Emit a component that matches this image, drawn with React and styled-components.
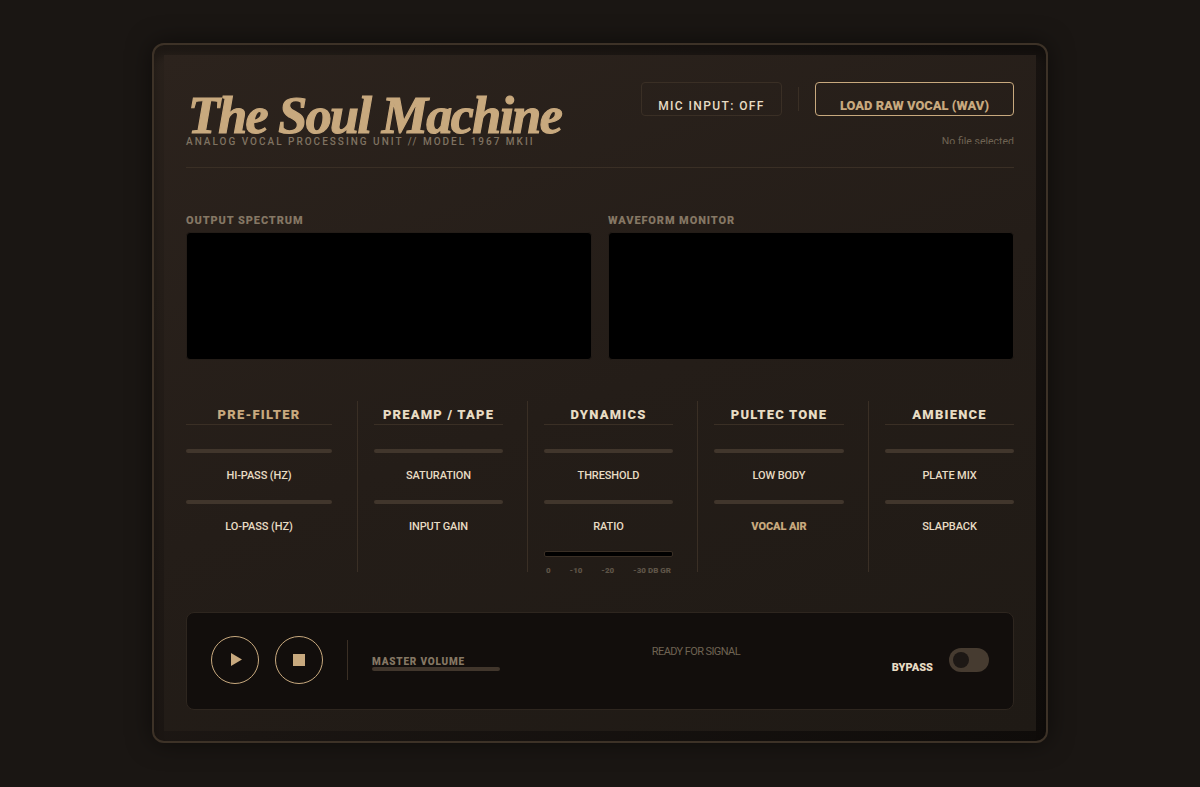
import React from "react";
import styled, { createGlobalStyle } from "styled-components";

const GlobalStyle = createGlobalStyle`
  html, body {
    margin: 0;
    height: 100%;
    background: #1a1613;
  }
  * {
    box-sizing: border-box;
  }
`;

const SANS = `Roboto, "Liberation Sans", Arial, sans-serif`;

const groups = [
  { title: "PRE-FILTER", accent: true, sliders: [{ label: "HI-PASS (HZ)" }, { label: "LO-PASS (HZ)" }] },
  { title: "PREAMP / TAPE", sliders: [{ label: "SATURATION" }, { label: "INPUT GAIN" }] },
  { title: "DYNAMICS", meter: true, sliders: [{ label: "THRESHOLD" }, { label: "RATIO" }] },
  { title: "PULTEC TONE", sliders: [{ label: "LOW BODY" }, { label: "VOCAL AIR", accent: true }] },
  { title: "AMBIENCE", sliders: [{ label: "PLATE MIX" }, { label: "SLAPBACK" }] },
];

function App() {
  return (
    <Page>
      <GlobalStyle />
      <Chassis>
        <Faceplate>
          {/* header */}
          <Header>
            <Brand>
              <Title>The Soul Machine</Title>
              <Subtitle>ANALOG VOCAL PROCESSING UNIT // MODEL 1967 MKII</Subtitle>
            </Brand>
            <HeaderRight>
              <Actions>
                <MicButton>MIC INPUT: OFF</MicButton>
                <VDivider />
                <LoadButton>LOAD RAW VOCAL (WAV)</LoadButton>
              </Actions>
              <FileName>No file selected</FileName>
            </HeaderRight>
          </Header>

          {/* scopes */}
          <Scopes>
            <div>
              <ScopeLabel>OUTPUT SPECTRUM</ScopeLabel>
              <Screen />
            </div>
            <div>
              <ScopeLabel>WAVEFORM MONITOR</ScopeLabel>
              <Screen />
            </div>
          </Scopes>

          {/* channel strip */}
          <Rack>
            {groups.map((group) => (
              <Group key={group.title}>
                <GroupTitle $accent={group.accent}>{group.title}</GroupTitle>
                {group.sliders.map((slider) => (
                  <React.Fragment key={slider.label}>
                    <Track />
                    <SliderLabel $accent={slider.accent}>{slider.label}</SliderLabel>
                  </React.Fragment>
                ))}
                {group.meter && (
                  <>
                    <Meter />
                    <MeterScale>
                      <span>0</span>
                      <span>-10</span>
                      <span>-20</span>
                      <span>-30 DB GR</span>
                    </MeterScale>
                  </>
                )}
              </Group>
            ))}
          </Rack>

          {/* transport */}
          <Transport>
            <RoundButton aria-label="Play">
              <PlayIcon width="11" height="13" viewBox="0 0 11 13">
                <path d="M0 0 L11 6.5 L0 13 Z" fill="#c8a97e" />
              </PlayIcon>
            </RoundButton>
            <RoundButton aria-label="Stop">
              <StopSquare />
            </RoundButton>
            <TransportDivider />
            <Volume>
              <VolumeLabel>MASTER VOLUME</VolumeLabel>
              <VolumeTrack />
            </Volume>
            <Status>READY FOR SIGNAL</Status>
            <Bypass>
              <BypassLabel>BYPASS</BypassLabel>
              <Toggle>
                <Knob />
              </Toggle>
            </Bypass>
          </Transport>
        </Faceplate>
      </Chassis>
    </Page>
  );
}

// Styles
const Page = styled.div`
  min-height: 787px;
  padding-top: 43px;
  display: flex;
  justify-content: center;
  align-items: flex-start;
  background: #1a1613;
  font-family: ${SANS};
`;

const Chassis = styled.div`
  width: 896px;
  height: 700px;
  padding: 10px;
  border: 2px solid #3d3227;
  border-radius: 12px;
  background: linear-gradient(135deg, #2a221c 0%, #1a1512 50%, #0f0c0a 100%);
  box-shadow: 0 0 24px rgba(0, 0, 0, 0.5), inset 0 10px 10px rgba(0, 0, 0, 0.3);
`;

const Faceplate = styled.div`
  height: 676px;
  padding: 0 22px;
  background: linear-gradient(160deg, #2c231d 0%, #241d18 50%, #1f1a15 100%);
`;

const Header = styled.header`
  height: 113px;
  padding-top: 27px;
  display: flex;
  justify-content: space-between;
  border-bottom: 1px solid #3a2f25;
`;

const Brand = styled.div`
  display: flex;
  flex-direction: column;
`;

const Title = styled.h1`
  margin: 0;
  padding: 8px 0 0 2px;
  height: 54px;
  font-family: "Liberation Serif", "Times New Roman", serif;
  font-style: italic;
  font-weight: 700;
  font-size: 52px;
  line-height: 52px;
  letter-spacing: -1.6px;
  color: #c8a97e;
  -webkit-text-stroke: 1.2px #c8a97e;
  white-space: nowrap;
`;

const Subtitle = styled.div`
  font-size: 10px;
  font-weight: 500;
  line-height: 12px;
  letter-spacing: 2px;
  color: #7f7261;
  white-space: nowrap;
`;

const HeaderRight = styled.div`
  display: flex;
  flex-direction: column;
  align-items: flex-end;
`;

const Actions = styled.div`
  display: flex;
  align-items: center;
`;

const MicButton = styled.button`
  width: 141px;
  height: 34px;
  padding: 13px 0 0;
  background: transparent;
  border: 1px solid #3a2f25;
  border-radius: 4px;
  color: #e8dcc4;
  font-family: ${SANS};
  font-weight: 500;
  font-size: 12px;
  letter-spacing: 1.4px;
`;

const VDivider = styled.div`
  width: 1px;
  height: 24px;
  margin: 0 16px;
  background: #3a2f25;
`;

const LoadButton = styled.button`
  width: 199px;
  height: 34px;
  padding: 13px 0 0;
  background: transparent;
  border: 1px solid #c8a97e;
  border-radius: 4px;
  color: #c8a97e;
  font-family: ${SANS};
  font-weight: 900;
  font-size: 12.9px;
`;

const FileName = styled.div`
  margin-top: 20px;
  height: 8px;
  overflow: hidden;
  font-size: 10.5px;
  line-height: 12px;
  color: #6f6353;
`;

const Scopes = styled.section`
  margin-top: 45px;
  display: grid;
  grid-template-columns: 406px 406px;
  justify-content: space-between;
`;

const ScopeLabel = styled.div`
  height: 19px;
  font-weight: 900;
  font-size: 11px;
  line-height: 16px;
  letter-spacing: 0.9px;
  color: #857764;
`;

const Screen = styled.div`
  height: 128px;
  background: #000;
  border: 1px solid #241d18;
  border-radius: 4px;
`;

const Rack = styled.section`
  margin-top: 41px;
  height: 171px;
  display: grid;
  grid-template-columns: 172px 170px 170px 171px 145px;
  grid-template-rows: 171px;
`;

const Group = styled.div`
  padding: 0 24px 0 16px;
  border-right: 1px solid #3a2f25;
  display: flex;
  flex-direction: column;

  &:first-child {
    padding-left: 0;
    padding-right: 25px;
  }

  &:last-child {
    padding-right: 0;
    border-right: 0;
  }
`;

const GroupTitle = styled.h3`
  margin: 0 0 24px;
  height: 24px;
  padding-top: 6px;
  flex-shrink: 0;
  border-bottom: 1px solid #3a2f25;
  text-align: center;
  font-family: ${SANS};
  font-weight: 900;
  font-size: 13px;
  line-height: 15px;
  letter-spacing: 1.2px;
  color: ${(p) => (p.$accent ? "#c8a97e" : "#e8dcc4")};
  white-space: nowrap;
`;

const Track = styled.div`
  height: 4px;
  border-radius: 2px;
  background: #41362c;
  flex-shrink: 0;
`;

const SliderLabel = styled.div`
  height: 47px;
  padding-top: 16px;
  flex-shrink: 0;
  text-align: center;
  font-size: 11px;
  line-height: 14px;
  letter-spacing: -0.1px;
  font-weight: ${(p) => (p.$accent ? 900 : 500)};
  color: ${(p) => (p.$accent ? "#c8a97e" : "#e8dcc4")};
  white-space: nowrap;
`;

const Meter = styled.div`
  height: 6px;
  flex-shrink: 0;
  background: #000;
  border: 1px solid #3a2f25;
  border-radius: 2px;
`;

const MeterScale = styled.div`
  margin-top: 9px;
  padding: 0 2px;
  display: flex;
  justify-content: space-between;
  flex-shrink: 0;
  font-weight: 900;
  font-size: 8px;
  line-height: 10px;
  color: #5e5447;
`;

const Transport = styled.section`
  margin-top: 40px;
  height: 98px;
  padding: 0 24px 3px;
  display: flex;
  align-items: center;
  background: #120e0c;
  border: 1px solid #2e261f;
  border-radius: 8px;
`;

const RoundButton = styled.button`
  width: 48px;
  height: 48px;
  margin-right: 16px;
  padding: 0;
  display: flex;
  align-items: center;
  justify-content: center;
  background: transparent;
  border: 1px solid #c8a97e;
  border-radius: 50%;
`;

const PlayIcon = styled.svg`
  display: block;
  margin-left: 2px;
`;

const StopSquare = styled.span`
  display: block;
  width: 12px;
  height: 12px;
  background: #c8a97e;
`;

const TransportDivider = styled.div`
  width: 1px;
  height: 40px;
  margin: 0 24px 0 8px;
  background: #3a2f25;
`;

const Volume = styled.div`
  width: 128px;
  padding-top: 8px;
`;

const VolumeLabel = styled.div`
  font-weight: 900;
  font-size: 10px;
  line-height: 10px;
  letter-spacing: 0.8px;
  color: #857764;
  white-space: nowrap;
`;

const VolumeTrack = styled.div`
  height: 4px;
  border-radius: 2px;
  background: #41362c;
`;

const Status = styled.div`
  flex: 1;
  margin-top: -16px;
  text-align: center;
  font-size: 11px;
  letter-spacing: -0.6px;
  color: #6f6353;
`;

const Bypass = styled.div`
  display: flex;
  align-items: center;
  gap: 16px;
`;

const BypassLabel = styled.div`
  margin-top: 16px;
  font-weight: 900;
  font-size: 11px;
  color: #e8dcc4;
`;

const Toggle = styled.div`
  width: 40px;
  height: 24px;
  padding: 4px;
  border-radius: 12px;
  background: #463b30;
`;

const Knob = styled.div`
  width: 16px;
  height: 16px;
  border-radius: 50%;
  background: #1d1815;
`;

export default App;
